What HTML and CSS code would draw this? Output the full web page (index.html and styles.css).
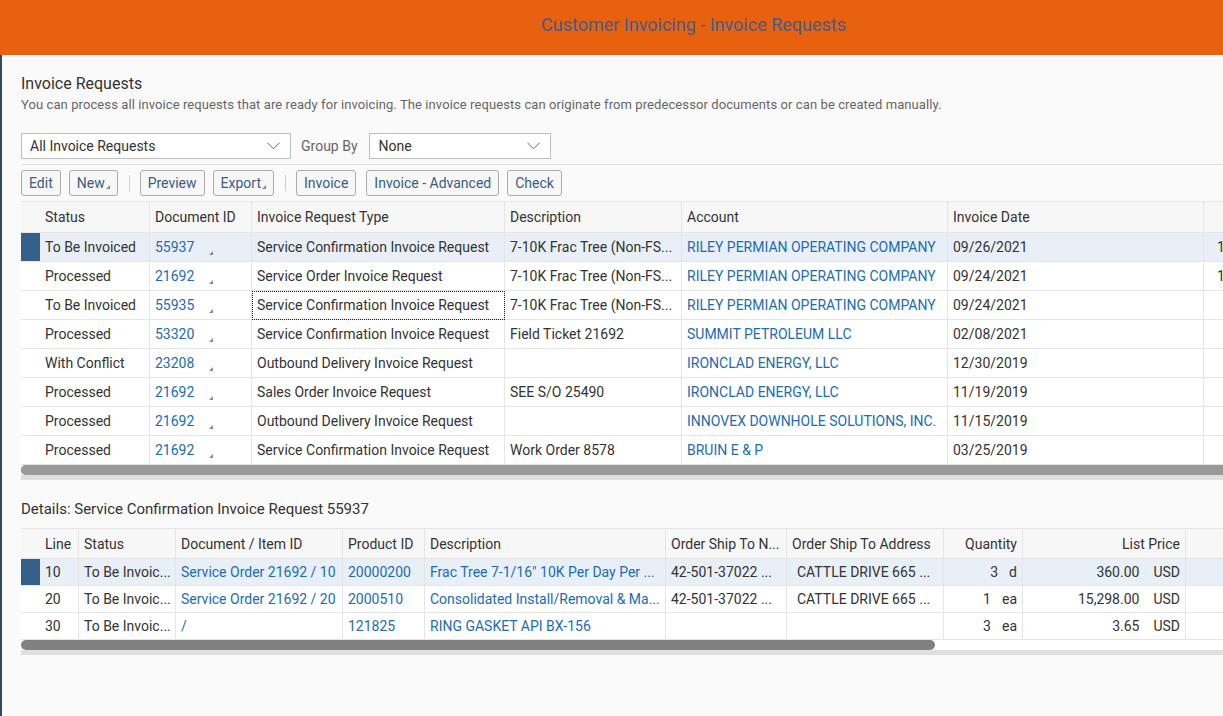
FILE: index.html
```html
<!DOCTYPE html>
<html lang="en">
<head>
<meta charset="utf-8">
<title>Customer Invoicing - Invoice Requests</title>
<link rel="stylesheet" href="styles.css">
</head>
<body>
<header class="topbar"><h1>Customer Invoicing - Invoice Requests</h1></header>
<main class="page">
  <section class="intro">
    <h2>Invoice Requests</h2>
    <p>You can process all invoice requests that are ready for invoicing. The invoice requests can originate from predecessor documents or can be created manually.</p>
  </section>

  <div class="filters">
    <div class="select wide"><span>All Invoice Requests</span><svg class="chev" width="13" height="8" viewBox="0 0 13 8"><polyline points="0.5,0.8 6.5,6.8 12.5,0.8"/></svg></div>
    <span class="filter-label">Group By</span>
    <div class="select narrow"><span>None</span><svg class="chev" width="13" height="8" viewBox="0 0 13 8"><polyline points="0.5,0.8 6.5,6.8 12.5,0.8"/></svg></div>
  </div>

  <div class="toolbar">
    <button class="btn">Edit</button>
    <button class="btn">New<i class="menu-tri"></i></button>
    <span class="sep"></span>
    <button class="btn">Preview</button>
    <button class="btn">Export<i class="menu-tri"></i></button>
    <span class="sep"></span>
    <button class="btn">Invoice</button>
    <button class="btn adv">Invoice - Advanced</button>
    <button class="btn">Check</button>
  </div>

  <div class="grid-wrap">
    <table class="grid main-grid">
      <colgroup>
        <col class="w-sel"><col class="w-status"><col class="w-doc"><col class="w-type"><col class="w-desc"><col class="w-acc"><col class="w-date"><col class="w-more">
      </colgroup>
      <thead>
        <tr><th class="sel"></th><th>Status</th><th>Document ID</th><th>Invoice Request Type</th><th>Description</th><th>Account</th><th>Invoice Date</th><th></th></tr>
      </thead>
      <tbody>
        <tr class="selected"><td class="sel"><span class="mark"></span></td><td>To Be Invoiced</td><td><a class="link id">55937</a><i class="cell-tri"></i></td><td>Service Confirmation Invoice Request</td><td>7-10K Frac Tree (Non-FS...</td><td><a class="link">RILEY PERMIAN OPERATING COMPANY</a></td><td>09/26/2021</td><td class="more">1</td></tr>
        <tr><td class="sel"></td><td>Processed</td><td><a class="link id">21692</a><i class="cell-tri"></i></td><td>Service Order Invoice Request</td><td>7-10K Frac Tree (Non-FS...</td><td><a class="link">RILEY PERMIAN OPERATING COMPANY</a></td><td>09/24/2021</td><td class="more">1</td></tr>
        <tr><td class="sel"></td><td>To Be Invoiced</td><td><a class="link id">55935</a><i class="cell-tri"></i></td><td class="focus">Service Confirmation Invoice Request</td><td>7-10K Frac Tree (Non-FS...</td><td><a class="link">RILEY PERMIAN OPERATING COMPANY</a></td><td>09/24/2021</td><td class="more"></td></tr>
        <tr><td class="sel"></td><td>Processed</td><td><a class="link id">53320</a><i class="cell-tri"></i></td><td>Service Confirmation Invoice Request</td><td>Field Ticket 21692</td><td><a class="link">SUMMIT PETROLEUM LLC</a></td><td>02/08/2021</td><td class="more"></td></tr>
        <tr><td class="sel"></td><td>With Conflict</td><td><a class="link id">23208</a><i class="cell-tri"></i></td><td>Outbound Delivery Invoice Request</td><td></td><td><a class="link">IRONCLAD ENERGY, LLC</a></td><td>12/30/2019</td><td class="more"></td></tr>
        <tr><td class="sel"></td><td>Processed</td><td><a class="link id">21692</a><i class="cell-tri"></i></td><td>Sales Order Invoice Request</td><td>SEE S/O 25490</td><td><a class="link">IRONCLAD ENERGY, LLC</a></td><td>11/19/2019</td><td class="more"></td></tr>
        <tr><td class="sel"></td><td>Processed</td><td><a class="link id">21692</a><i class="cell-tri"></i></td><td>Outbound Delivery Invoice Request</td><td></td><td><a class="link">INNOVEX DOWNHOLE SOLUTIONS, INC.</a></td><td>11/15/2019</td><td class="more"></td></tr>
        <tr><td class="sel"></td><td>Processed</td><td><a class="link id">21692</a><i class="cell-tri"></i></td><td>Service Confirmation Invoice Request</td><td>Work Order 8578</td><td><a class="link">BRUIN E &amp; P</a></td><td>03/25/2019</td><td class="more"></td></tr>
      </tbody>
    </table>
  </div>
  <div class="hscroll first"><div class="track"><div class="thumb"></div></div><div class="rail"></div></div>

  <h3 class="details-title">Details: Service Confirmation Invoice Request 55937</h3>

  <div class="grid-wrap">
    <table class="grid detail-grid">
      <colgroup>
        <col class="d-sel"><col class="d-line"><col class="d-status"><col class="d-doc"><col class="d-prod"><col class="d-desc"><col class="d-name"><col class="d-addr"><col class="d-qty"><col class="d-price"><col class="d-more">
      </colgroup>
      <thead>
        <tr><th class="sel"></th><th>Line</th><th>Status</th><th>Document / Item ID</th><th>Product ID</th><th>Description</th><th>Order Ship To N...</th><th>Order Ship To Address</th><th class="right">Quantity</th><th class="right">List Price</th><th></th></tr>
      </thead>
      <tbody>
        <tr class="selected"><td class="sel"><span class="mark"></span></td><td>10</td><td>To Be Invoic...</td><td><a class="link">Service Order 21692 / 10</a></td><td><a class="link">20000200</a></td><td><a class="link">Frac Tree 7-1/16" 10K Per Day Per ...</a></td><td>42-501-37022 ...</td><td class="addr">CATTLE DRIVE 665 ...</td><td class="right"><span>3</span><span class="unit">d</span></td><td class="right"><span>360.00</span><span class="cur">USD</span></td><td></td></tr>
        <tr><td class="sel"></td><td>20</td><td>To Be Invoic...</td><td><a class="link">Service Order 21692 / 20</a></td><td><a class="link">2000510</a></td><td><a class="link">Consolidated Install/Removal &amp; Ma...</a></td><td>42-501-37022 ...</td><td class="addr">CATTLE DRIVE 665 ...</td><td class="right"><span>1</span><span class="unit">ea</span></td><td class="right"><span>15,298.00</span><span class="cur">USD</span></td><td></td></tr>
        <tr><td class="sel"></td><td>30</td><td>To Be Invoic...</td><td><a class="link">/</a></td><td><a class="link">121825</a></td><td><a class="link">RING GASKET API BX-156</a></td><td></td><td class="addr"></td><td class="right"><span>3</span><span class="unit">ea</span></td><td class="right"><span>3.65</span><span class="cur">USD</span></td><td></td></tr>
      </tbody>
    </table>
  </div>
  <div class="hscroll second"><div class="track"><div class="thumb"></div></div><div class="rail"></div></div>
</main>
</body>
</html>
```

FILE: styles.css
```css
* { box-sizing: border-box; }
html, body { margin: 0; padding: 0; }
body {
  width: 1223px;
  height: 716px;
  overflow: hidden;
  background: #fafafa;
  color: #333333;
  font-family: Roboto, "Liberation Sans", Arial, sans-serif;
}

.topbar {
  height: 55px;
  background: #e8610e;
  padding: 13px 0 0 164px;
  text-align: center;
}
.topbar h1 {
  margin: 0;
  font-size: 18px;
  font-weight: 400;
  line-height: 24px;
  color: #3e5f91;
}

.page {
  height: 661px;
  overflow: hidden;
  border-left: 2px solid #2e4a68;
  padding: 19px 0 0 19px;
}

.intro h2 {
  margin: 0;
  font-size: 16px;
  font-weight: 400;
  line-height: 20px;
  color: #333;
}
.intro p {
  margin: 3px 0 0;
  font-size: 13px;
  letter-spacing: 0.09px;
  line-height: 16px;
  color: #666;
  white-space: nowrap;
}

.filters {
  display: flex;
  align-items: center;
  margin-top: 20px;
  height: 26px;
}
.select {
  display: flex;
  align-items: center;
  justify-content: space-between;
  height: 26px;
  border: 1px solid #bfbfbf;
  background: #fff;
  padding: 0 10px 0 8px;
  font-size: 14px;
  color: #333;
}
.select.wide { width: 270px; }
.select.narrow { width: 182px; margin-left: 1px; padding-left: 9px; }
.chev polyline { fill: none; stroke: #666; stroke-width: 1; }
.filter-label {
  font-size: 14px;
  color: #666;
  margin: 0 10px;
}

.toolbar {
  margin-top: 5px;
  border-top: 1px solid #dedede;
  padding-top: 5px;
  display: flex;
  align-items: center;
  gap: 8px;
}
.btn {
  height: 26px;
  padding: 0 7px;
  border: 1px solid #ababab;
  border-radius: 3px;
  background: #f7f7f7;
  color: #3a5d85;
  font-family: inherit;
  font-size: 14px;
  line-height: 24px;
  display: inline-flex;
  align-items: center;
}
.btn.adv { margin-left: 2px; }
.menu-tri {
  display: inline-block;
  width: 0; height: 0;
  border-left: 4px solid transparent;
  border-bottom: 4px solid #8a8a8a;
  align-self: flex-end;
  margin: 0 0 6px 1px;
}
.sep {
  width: 1px;
  height: 16px;
  background: #cfcfcf;
  margin: 0 2px 0 3px;
}

.grid-wrap { overflow: hidden; margin-top: 5px; }
.grid {
  border-collapse: separate;
  border-spacing: 0;
  table-layout: fixed;
  font-size: 14px;
}
.grid th, .grid td {
  padding: 0 5px;
  white-space: nowrap;
  overflow: hidden;
  text-overflow: clip;
  text-align: left;
  font-weight: 400;
  color: #333;
  border-right: 1px solid #e5e5e5;
  border-bottom: 1px solid #e5e5e5;
  background: #fff;
}
.grid thead th {
  background: #f7f7f7;
  border-top: 1px solid #e5e5e5;
}
.grid .sel { border-right: none; padding: 0; position: relative; }
.grid thead .sel { background: #f7f7f7; }
.grid .right { text-align: right; }

.main-grid { width: 1342px; }
.main-grid thead tr { height: 32px; }
.main-grid tbody tr { height: 29px; }
.w-sel { width: 19px; }
.w-status { width: 110px; }
.w-doc { width: 102px; }
.w-type { width: 253px; }
.w-desc { width: 177px; }
.w-acc { width: 266px; }
.w-date { width: 256px; }
.w-more { width: 159px; }

.grid tr.selected td { background: #e9eff6; }
.grid tr.selected td.sel { background: #e9eff6; }
.mark {
  position: absolute;
  left: 0; top: 0; right: 0; bottom: -1px;
  background: #345f88;
}
.link { color: #1b6cb4; text-decoration: none; }
.link.id { display: inline-block; width: 53px; }
.cell-tri {
  display: inline-block;
  width: 0; height: 0;
  border-left: 4px solid transparent;
  border-bottom: 4px solid #8a8a8a;
  margin-left: 1px;
  vertical-align: -3px;
}
.focus { outline: 1px dotted #222; outline-offset: -1px; }
.more { padding-left: 13px !important; }

.hscroll { overflow: hidden; width: 1202px; }
.hscroll .track { height: 10px; background: #fff; }
.hscroll .thumb { height: 10px; border-radius: 5px; }
.hscroll .rail { height: 5px; background: #dfdfdf; }
.hscroll.first .thumb { width: 1220px; background: #9a9a9a; }
.hscroll.first .track { background: #9a9a9a; border-radius: 5px 0 0 5px; }
.hscroll.second .thumb { width: 914px; background: #808080; }

.details-title {
  margin: 19px 0 0;
  font-size: 15px;
  font-weight: 400;
  line-height: 20px;
  color: #333;
}
.details-title + .grid-wrap { margin-top: 9px; }

.detail-grid { width: 1315px; }
.detail-grid thead tr { height: 31px; }
.detail-grid tbody tr { height: 27px; }
.d-sel { width: 19px; }
.d-line { width: 39px; }
.d-status { width: 97px; }
.d-doc { width: 167px; }
.d-prod { width: 82px; }
.d-desc { width: 241px; }
.d-name { width: 121px; }
.d-addr { width: 157px; }
.d-qty { width: 79px; }
.d-price { width: 163px; }
.d-more { width: 150px; }
.grid td.addr { padding-left: 10px; }
.unit { display: inline-block; margin-left: 11px; }
.cur { display: inline-block; margin-left: 14px; }
```
